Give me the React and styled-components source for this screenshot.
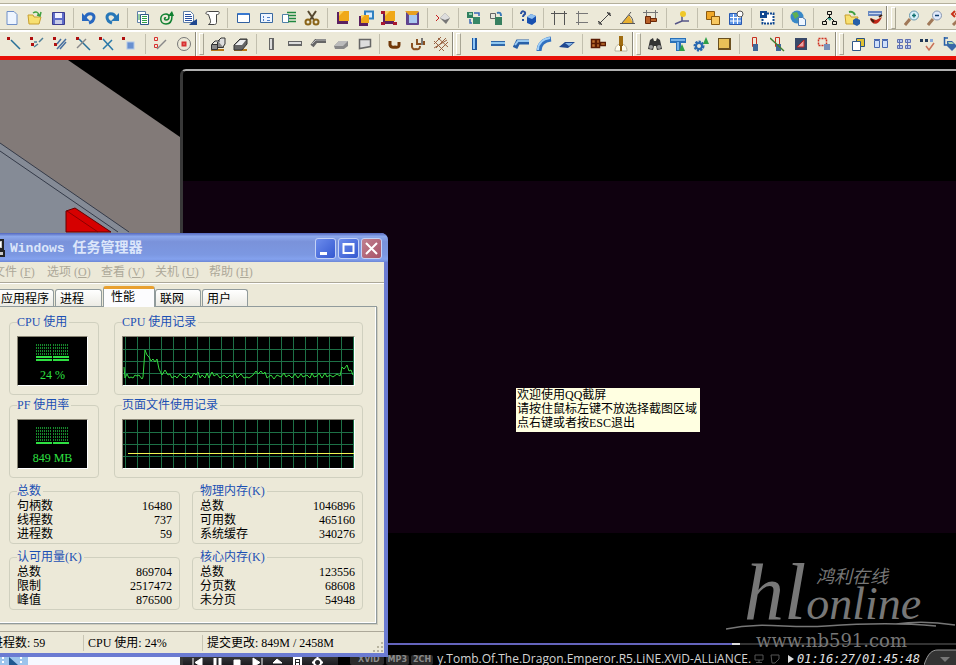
import React from "react";
import styled, { createGlobalStyle, css } from "styled-components";

const GlobalStyle = createGlobalStyle`
  * {
    box-sizing: border-box;
  }
  body {
    margin: 0;
    background: #000;
    font-family: "Liberation Serif", "Noto Sans CJK SC", serif;
    font-size: 12px;
    line-height: 14px;
    color: #000;
  }
  button {
    font: inherit;
    color: inherit;
    padding: 0;
    border: 0;
    background: none;
  }
`;

const S = ({ d, c = "#333", w = 1, f = "none" }) => (
  <path d={d} stroke={c} strokeWidth={w} fill={f} />
);

const Gold = ({ x = 4, y = 1, s = 10 }) => (
  <>
    <rect x={x - 2} y={y + 1} width={s + 1} height={s + 2} fill="#5b2060" />
    <rect x={x} y={y} width={s} height={s} fill="#f0a818" />
    <path d={`M${x} ${y}h${s / 2}l-${s / 2} ${s / 2}z`} fill="#fad060" />
  </>
);

const Dots = () => <rect x="0" y="1" width="3" height="3" fill="#b01010" />;

const icons = {
  new: <S d="M3 1.5h7l3 3v10H3z" c="#6f8fc8" f="#eef5ff" />,
  open: (
    <>
      <S d="M1 5h5l1 2h7l-2 7H2z" c="#c8a030" f="#f8e070" />
      <S d="M6 3c3-2 5-1 6 2M10 5l3 1 1-4" c="#40a040" w={1.5} />
    </>
  ),
  save: (
    <>
      <S d="M2.5 2.5h12v12h-12z" c="#3c3c90" f="#5e6cc8" />
      <rect x="5" y="3" width="7" height="5" fill="#f0f0ff" />
      <rect x="5" y="10" width="7" height="4" fill="#c8cce8" />
    </>
  ),
  undo: (
    <>
      <S d="M4 8c2-6 9-5 9-1 0 3-2 5-5 6" c="#2868c0" w={3} />
      <path d="M1 3v8h8z" fill="#2868c0" />
    </>
  ),
  redo: (
    <>
      <S d="M12 8C10 2 3 3 3 7c0 3 2 5 5 6" c="#2878b8" w={3} />
      <path d="M15 3v8H7z" fill="#2878b8" />
    </>
  ),
  copy: (
    <>
      <S d="M2.500 1.500h8v11h-8z" c="#6080a8" f="#fff" />
      <S d="M5.500 4.500h8v10h-8z" c="#305888" f="#fff" />
      <S d="M7 6.500h5M7 8.500h5M7 10.500h5M7 12.500h5M4 4v6" c="#30a048" />
    </>
  ),
  spiral: (
    <>
      <S d="M8 8c-2-1-2 2 0 2 4 0 4-6 0-6-7 0-7 10 0 10 4 0 6-3 6-8" c="#108030" w={1.5} />
      <path d="M10 6l4-5 2 5z" fill="#108030" />
    </>
  ),
  docs: (
    <>
      <S d="M2.500 1.500h7l3 3v8h-10z" c="#6080a8" f="#fff" />
      <S d="M4 4.500h6M4 6.500h7M4 8.500h7M4 10.500h7" c="#2850a0" />
      <path d="M8 15h8V9l-5 3z" fill="#204890" />
    </>
  ),
  scroll: (
    <S d="M4.500 4.500c-4 0-3-3 0-3h10c1 0 1 3-1 3h-1v8c0 2-2 2-2 2h-6c2-1 2-2 2-4z" c="#444" f="#fff" />
  ),
  window: (
    <>
      <S d="M2.500 3.500h12v9h-12z" c="#3060a0" f="#fff" />
      <rect x="3" y="3" width="11" height="2" fill="#3878d0" />
    </>
  ),
  props: (
    <>
      <S d="M2.500 3.500h12v9h-12z" c="#3868a0" f="#eef5ff" />
      <S d="M5.500 6v2M5.500 9v2M9 7.500h3M9 10.500h3" c="#5080c8" />
    </>
  ),
  list: (
    <>
      <S d="M1.500 4.500h6v8h-6z" c="#5080a8" f="#fff" />
      <S d="M6 2.500h9M7 5.500h8M8 8.500h7M7 11.500h8" c="#208840" w={1.5} />
    </>
  ),
  cut: (
    <>
      <S d="M4 1l6 9M12 1L6 10" c="#554830" w={2} />
      <circle cx="4" cy="12" r="2.500" fill="none" stroke="#8a6418" strokeWidth="2" />
      <circle cx="12" cy="12" r="2.500" fill="none" stroke="#8a6418" strokeWidth="2" />
    </>
  ),
  goldA: <Gold />,
  goldB: (
    <>
      <S d="M7 1.500h8v7H7z" c="#3080c0" w={2} f="#d8ecff" />
      <Gold x={3} y={5} s={8} />
    </>
  ),
  goldC: (
    <>
      <Gold />
      <path d="M0 1h4v3H0zM12 12h4v3h-4zM0 12h4v3H0z" fill="#a81830" />
    </>
  ),
  goldD: (
    <>
      <S d="M2.500 2.500h12v12h-12z" c="#604090" f="#604890" />
      <path d="M1 1h14l-3 4H5z" fill="#e8a020" />
      <rect x="5" y="5" width="8" height="8" fill="#a8c8f0" />
    </>
  ),
  diamond: (
    <>
      <S d="M1 5l3 3-3 3" c="#c82020" />
      <path d="M5 8l5-5 5 5-4 6z" fill="#777" />
      <path d="M5 8l5-5 5 5-5 2z" fill="#ddd" />
    </>
  ),
  cubesA: (
    <>
      <rect x="1" y="2" width="6" height="6" fill="#308060" />
      <rect x="7" y="7" width="7" height="7" fill="#388868" />
      <S d="M8 3h5v3M4 9v4h2" c="#3868b8" w={1.5} />
      <rect x="3" y="3" width="3" height="2" fill="#90d0b0" />
    </>
  ),
  cubesB: (
    <>
      <S d="M1.500 3.500h5v5h-5z" c="#666" f="#e8e8e0" />
      <rect x="6" y="7" width="7" height="8" fill="#388060" />
      <S d="M8 3c3-1 4 0 4 3" c="#3878b8" w={2} />
    </>
  ),
  help: (
    <>
      <S d="M1 4c0-4 5-3 4 0-1 1-2 1-2 3M3 9v2" c="#2850a0" w={2} />
      <path d="M7 7l4-3 5 2v6l-4 3-5-2z" fill="#1850b0" />
      <path d="M7 7l4-3 5 2-4 3z" fill="#90c0f0" />
    </>
  ),
  dimH: <S d="M3.500 1v14M13.500 1v14M0 3.500h16" c="#555" />,
  dimV: <S d="M4.500 1v14M2 3.500h12M2 12.500h12" c="#777" />,
  dimD: <S d="M3 13L13 3M1 11l4 4M10 2l4 4M2 11v3h3M10 3h3v3" c="#444" />,
  angle: (
    <>
      <path d="M2 13h11L9 5z" fill="#e8b030" />
      <S d="M0 13.500h15M2 13L11 2M9 5c3 2 4 5 4 8" c="#555" />
    </>
  ),
  dimBrown: (
    <>
      <S d="M3.500 0v8M12.500 0v8M0 2.500h15" c="#777" />
      <S d="M2.500 6.500h5v7h-5zM7.500 8.500h6v3h-6z" c="#6a2808" f="#b86028" />
    </>
  ),
  pin: (
    <>
      <S d="M1 14l7-3h7M8 11V6" c="#558" w={1.5} />
      <circle cx="9" cy="4" r="3" fill="#f0c828" />
    </>
  ),
  overlap: (
    <>
      <S d="M1.500 1.500h8v8h-8z" c="#8a5a10" f="#f0a828" />
      <S d="M6.500 6.500h8v8h-8z" c="#8a5a10" f="#f8c860" />
    </>
  ),
  calendar: (
    <>
      <S d="M1.500 3.500h12v11h-12z" c="#2858b0" f="#6098e8" />
      <S d="M2 7.500h11M2 11h11M5.500 4v10M9.500 4v10" c="#fff" />
      <circle cx="12" cy="4" r="3" fill="#fff" stroke="#555" />
    </>
  ),
  select: (
    <>
      <path d="M8 3.500h6.500v10h-11V9" fill="#fff" stroke="#104890" strokeWidth="2" strokeDasharray="2 1" />
      <rect x="1" y="1" width="7" height="7" fill="#104890" />
      <rect x="3" y="3" width="2" height="2" fill="#fff" />
    </>
  ),
  globe: (
    <>
      <circle cx="7" cy="7" r="6.500" fill="#3888c8" />
      <path d="M2 3l5-1 2 4-4 3zM7 9l4-2 1 5-3 1z" fill="#60b050" />
      <S d="M8.500 7.500h4l3 2v6h-7z" c="#4878b0" f="#eef6ff" />
    </>
  ),
  tree: (
    <>
      <S d="M6.500 1.500h4v3h-4zM1.500 11.500h4v3h-4zM11.500 11.500h4v3h-4zM8.500 5v3M8 7l-4 4M9 7l4 4" c="#111" />
      <path d="M6 8h5l-2 3z" fill="#40a090" />
    </>
  ),
  folderCube: (
    <>
      <S d="M1 5h5l1 2h7l-2 7H2z" c="#c8a030" f="#f8e070" />
      <S d="M5 2c4-1 5 1 6 3" c="#40a040" w={2} />
      <path d="M9 10l3-2 4 2v4l-3 2-4-2z" fill="#2860a8" />
    </>
  ),
  brush: (
    <>
      <rect x="1" y="1" width="14" height="5" fill="#6888c0" />
      <S d="M2 3.500h12" c="#c8d8f0" />
      <path d="M3 8c1 7 8 8 11 1l1-2-6 3z" fill="#c02818" />
      <S d="M4 9l3 3M12 7l3-2" c="#402010" w={2} />
    </>
  ),
  zoomIn: (
    <>
      <S d="M1 15l5-6" c="#a07858" w={3} />
      <circle cx="10" cy="5.500" r="4.500" fill="#d8f0f8" stroke="#6898b0" />
      <S d="M8 5.500h4M10 3.500v4" c="#107070" w={1.5} />
    </>
  ),
  zoomOut: (
    <>
      <S d="M1 15l5-6" c="#a07858" w={3} />
      <circle cx="10" cy="5.500" r="4.500" fill="#e0e8fa" stroke="#8898b0" />
      <S d="M8 5.500h4" c="#104070" w={1.5} />
    </>
  ),
  zoomBack: (
    <>
      <S d="M5 1L2 4l3 3M9 1L6 4l3 3" c="#c83018" w={2} />
      <S d="M3 15l6-6" c="#a07858" w={3} />
    </>
  ),

  snapA: <><Dots /><S d="M4 4l9 9" c="#287098" w={1.5} /></>,
  snapB: (
    <><Dots /><rect y="7" x="1" width="3" height="3" fill="#b01010" /><S d="M4 11l4-3M9 6l4-4M4 6h3" c="#508098" w={1.5} /></>
  ),
  snapC: (
    <><Dots /><rect y="7" x="1" width="3" height="3" fill="#b01010" /><S d="M4 13l9-10M7 13l6-7M4 8l4-5" c="#4870a0" w={1.5} /></>
  ),
  snapD: <><Dots /><S d="M3 3l11 11" c="#287098" w={1.5} /><S d="M1 12l9-9" c="#888" w={1.5} /></>,
  snapE: <><Dots /><S d="M4 3l10 11M13 4l-9 9" c="#2878a8" w={1.5} /></>,
  snapF: (
    <><Dots /><rect x="5" y="6" width="7" height="7" fill="#6890d0" stroke="#b0c8e8" /></>
  ),
  snapG: (
    <>
      <S d="M1.500 1.500h3v3h-3zM1.500 8.500h3v3h-3z" c="#d83030" />
      <S d="M4 13l9-9" c="#888" w={1.5} />
    </>
  ),
  target: (
    <>
      <circle cx="8" cy="8" r="6.500" fill="none" stroke="#777" />
      <S d="M6.500 6.500h3v3h-3z" c="#d83030" w={2} />
    </>
  ),
  boxesA: (
    <>
      <path d="M1 13h13v2H1z" fill="#b87818" />
      <S d="M1.500 8.500h6v5h-6zM7.500 5.500h6v6h-6z" c="#333" f="#888" />
      <S d="M2 8l3-3h5M8 5l3-3h4v6l-2 3" c="#333" f="#ddd" />
    </>
  ),
  boxesB: (
    <>
      <path d="M1 13h13v2H1z" fill="#b87818" />
      <S d="M1 9l6-6h7v5l-5 6H1z" c="#333" f="#666" />
      <path d="M2 9l5-5h6L9 9z" fill="#eee" />
    </>
  ),
  column: <><rect x="5" y="2" width="5" height="12" fill="#666" /><rect x="6" y="3" width="2" height="10" fill="#ddd" /></>,
  beam: <><rect x="1" y="5" width="14" height="5" fill="#666" /><rect x="2" y="6" width="12" height="2" fill="#ddd" /></>,
  bent: <><S d="M2 10l4-5h10" c="#666" w={4} /><S d="M2 8l4-4h10" c="#bbb" w={1} /></>,
  slab: <><path d="M1 10l5-5h9v5l-4 3H2z" fill="#888" /><path d="M1 10l5-5h9l-5 5z" fill="#bbb" /></>,
  plate: <S d="M3.500 3.500h11v7l-11 2z" c="#666" w={1.5} f="#ddd" />,
  hook: <S d="M3 5v4q1 3 5 2 4 1 4-2V6" c="#703808" w={3} />,
  hooks: <><S d="M2 7v4q1 3 4 2 4 1 4-3M7 3v5h7V5" c="#8a5020" w={2} /><S d="M12 2v7" c="#777" w={2} /></>,
  mesh: <S d="M1 8L8 1M3 12L13 2M6 15l9-9M1 5l10 10M5 2l10 9M1 12l13-8" c="#986040" />,
  columnB: <><rect x="5" y="2" width="5" height="12" fill="#2058a0" /><rect x="6" y="2" width="2" height="11" fill="#90c8f8" /></>,
  beamB: <><rect x="1" y="5" width="14" height="5" fill="#3068a8" /><rect x="1" y="6" width="14" height="2" fill="#90c8f0" /></>,
  bentB: <><S d="M2 12l3-6h11" c="#2860a8" w={5} /><S d="M2 9l3-4h11" c="#98c8f0" w={2} /></>,
  arcB: <><S d="M3 15c0-6 4-11 12-12" c="#3070c0" w={5} /><S d="M2 14c0-6 4-11 12-12" c="#a0d0f8" w={2} /></>,
  wedge: <><path d="M0 11l6-5h10l-7 6z" fill="#204890" /><path d="M6 7h8l-4 3z" fill="#88b8e8" /></>,
  bolts: (
    <S d="M1.500 3.500h4v8h-4zM6.500 3.500h3v8h-3zM10.500 6.500h5v3h-5zM1 7.500h9" c="#5a1c04" w={1.5} f="#c07030" />
  ),
  broom: <><path d="M2 15c0-5 3-7 6-7s6 2 6 7z" fill="#fffdf0" stroke="#b8b4a0" /><rect x="6" y="0" width="4" height="10" fill="#a06c10" /><S d="M8 9v6" c="#8a5c10" w={2} /></>,
  binoc: (
    <>
      <path d="M1 13l2-9 3-2 1 3h2l1-3 3 2 2 9-5 1-1-4H7l-1 4z" fill="#333" />
      <circle cx="4" cy="11" r="2" fill="#999" />
      <circle cx="12" cy="11" r="2" fill="#999" />
    </>
  ),
  teeA: <><path d="M0 2h16v5h-5v8H6V7H0z" fill="#2870b8" /><S d="M1 4h14M8 6v8" c="#90c8f8" w={1.5} /><path d="M9 15l3-7 3 7z" fill="#30a048" /></>,
  gear: (
    <>
      <circle cx="6" cy="10" r="4" fill="none" stroke="#2868b0" strokeWidth="3" strokeDasharray="2 1" />
      <circle cx="6" cy="10" r="3" fill="none" stroke="#2868b0" strokeWidth="2" />
      <path d="M10 8l3-7 3 7z" fill="#30a048" />
    </>
  ),
  panel: <><rect x="2" y="2" width="13" height="12" fill="#6a5020" /><rect x="3" y="3" width="10" height="9" fill="#e8c058" /></>,
  tube: <><S d="M5.500 1.500h4v9h-4z" c="#c83020" /><path d="M6 8h5v7H6z" fill="#406898" /></>,
  tubeCut: <><S d="M5.500 1.500h4v9h-4z" c="#c83020" /><path d="M6 8h5v7H6z" fill="#406898" /><S d="M0 2l14 13" c="#408030" w={1.5} /></>,
  red: <><rect x="2" y="2" width="12" height="12" fill="#384868" /><path d="M4 11l7-7v7z" fill="#e8a0a0" stroke="#c02020" /></>,
  redDash: (
    <>
      <path d="M2.500 2.500h8v7h-8z" fill="none" stroke="#d03020" strokeWidth="1.500" strokeDasharray="2 1" />
      <rect x="8" y="8" width="6" height="6" fill="#7890b8" />
    </>
  ),
  views: <><S d="M6.500 2.500h8v8h-8z" c="#285080" f="#e0c030" /><S d="M2.500 5.500h8v9h-8z" c="#305888" f="#fff" /></>,
  twoWin: <S d="M1.500 4.500h5v7h-5zM9.500 4.500h5v7h-5zM1 3.500h6M9 3.500h6" c="#4868b0" f="#d0e0fa" />,
  grid: <S d="M1.500 3.500h5v3h-5zM9.500 3.500h5v3h-5zM1.500 9.500h5v3h-5zM9.500 9.500h5v3h-5zM3.500 3v10M11.500 3v10" c="#6070b0" f="#b8c8f0" />,
  check: <><path d="M1 3h3v3H1zM6 3h3v3H6z" fill="#203858" /><path d="M11 3h3v3h-3z" fill="#88a8d8" /><S d="M7 10l3 4 5-7" c="#c87058" w={1.5} /></>,
  paint: <><S d="M2.500 1v8h4M2 2h4" c="#2860a8" w={1.5} /><path d="M5 5h5l5 5-5 5-5-5z" fill="#3868a8" /><path d="M6 6h4l2 2H7z" fill="#a8d8b0" /></>,
};

const fileTools = [
  ["new", "open", "save"],
  ["undo", "redo"],
  ["copy", "spiral", "docs", "scroll"],
  ["window", "props", "list", "cut"],
  ["goldA", "goldB", "goldC", "goldD"],
  ["diamond"],
  ["cubesA", "cubesB"],
  ["help"],
  ["dimH", "dimV", "dimD", "angle", "dimBrown"],
  ["pin"],
  ["overlap", "calendar"],
  ["select"],
  ["globe"],
  ["tree", "folderCube", "brush"],
  "break",
  ["zoomIn", "zoomOut", "zoomBack"],
];

const modelTools = [
  ["snapA", "snapB", "snapC", "snapD", "snapE", "snapF"],
  ["snapG", "target"],
  "break",
  ["boxesA", "boxesB"],
  ["column", "beam", "bent", "slab", "plate"],
  ["hook", "hooks", "mesh"],
  "break",
  ["columnB", "beamB", "bentB", "arcB", "wedge"],
  ["bolts", "broom"],
  "break",
  ["binoc", "teeA", "gear", "panel"],
  ["tube", "tubeCut", "red", "redDash"],
  "break",
  ["views", "twoWin", "grid", "check", "paint"],
];

function Tools({ items, wide, indent }) {
  return (
    <ToolRow $indent={indent}>
      {items.map((group, i) => {
        if (group === "break") return <Break key={i} $wide={wide} />;
        return (
          <React.Fragment key={i}>
            {i > 0 && items[i - 1] !== "break" && <Separator />}
            {group.map((name) => (
              <ToolButton key={name} type="button" aria-label={name}>
                <svg width="16" height="16" viewBox="0 0 16 16" aria-hidden="true">
                  {icons[name]}
                </svg>
              </ToolButton>
            ))}
          </React.Fragment>
        );
      })}
    </ToolRow>
  );
}

function Meter({ value, lit }) {
  return (
    <MeterBox>
      <svg width="34" height="18" viewBox="0 0 34 18" aria-hidden="true">
        {[0, 3, 6, 9, 12, 15].map((y, i) => {
          const on = i >= 6 - lit;
          return (
            <path
              key={y}
              d={`M0 ${y + 1}h16M17 ${y + 1}h16`}
              stroke={on ? "#2ee042" : "#168a2c"}
              strokeWidth="2"
              strokeDasharray={on ? "none" : "1 1"}
            />
          );
        })}
      </svg>
      {value}
    </MeterBox>
  );
}

const cpuTrace =
  "1,30 2,41 4,37 6,41 8,40 10,41 12,38 14,39 16,38 19,42 20,40 22,13 24,18 26,20 28,24 30,22 32,25 34,22 36,32 39,38 42,33 45,38 47,37 49,41 52,39 54,41 57,37 60,40 63,41 66,38 68,41 71,36 73,38 75,35 77,41 79,38 82,41 84,36 86,41 89,35 91,39 94,37 97,41 101,38 104,41 107,38 109,40 112,36 114,41 118,37 121,41 124,40 126,41 130,38 133,34 135,37 138,34 140,37 142,35 144,41 148,38 151,42 154,38 158,40 161,36 163,40 166,38 169,41 172,37 175,41 178,37 180,40 184,38 187,41 189,36 191,40 194,39 196,36 199,41 202,36 204,40 207,38 210,40 214,37 217,39 219,30 221,32 224,28 226,34 228,33 230,38";

function Chart({ points, color }) {
  return (
    <ChartBox>
      <svg width="100%" height="48" aria-hidden="true">
        {Array.from({ length: 20 }, (_, i) => (
          <rect key={i} x={i * 12 + 2} y="0" width="1" height="48" fill="#1d7046" />
        ))}
        {[12, 24, 36].map((y) => (
          <rect key={y} x="0" y={y} width="100%" height="1" fill="#1d7046" />
        ))}
        <polyline points={points} fill="none" stroke={color} />
      </svg>
    </ChartBox>
  );
}

function Figures({ title, rows }) {
  return (
    <Group $compact>
      <legend>{title}</legend>
      <FigureTable>
        <tbody>
          {rows.map(([label, value]) => (
            <tr key={label}>
              <th scope="row">{label}</th>
              <td>{value}</td>
            </tr>
          ))}
        </tbody>
      </FigureTable>
    </Group>
  );
}

function TaskManager() {
  return (
    <Window>
      <TitleBar>
        <svg width="16" height="18" viewBox="0 0 16 18" aria-hidden="true">
          <path d="M2 1h12v9H2zM4 12h11v5H4z" fill="#c8c8c8" stroke="#222" strokeWidth="2" />
          <path d="M5 3h7v5H5z" fill="#fff" />
        </svg>
        <h1>
          <span>Windows </span>任务管理器
        </h1>
        <CaptionButton type="button" aria-label="最小化">
          <svg width="19" height="19" aria-hidden="true">
            <path d="M4 13h7v3H4z" fill="#fff" />
          </svg>
        </CaptionButton>
        <CaptionButton type="button" aria-label="最大化">
          <svg width="19" height="19" aria-hidden="true">
            <path d="M4.500 5h10v9h-10zM4 5.500h11" fill="none" stroke="#fff" strokeWidth="2" />
          </svg>
        </CaptionButton>
        <CaptionButton type="button" aria-label="关闭" $close>
          <svg width="19" height="19" aria-hidden="true">
            <path d="M4 4l11 11M15 4L4 15" stroke="#fff" strokeWidth="2" />
          </svg>
        </CaptionButton>
      </TitleBar>
      <MenuBar>
        {[["文件", "F"], ["选项", "O"], ["查看", "V"], ["关机", "U"], ["帮助", "H"]].map(([label, key]) => (
          <button type="button" key={key}>
            {label} (<u>{key}</u>)
          </button>
        ))}
      </MenuBar>
      <Tabs role="tablist">
        <Tab type="button" role="tab" $width={58}>应用程序</Tab>
        <Tab type="button" role="tab" $width={47}>进程</Tab>
        <Tab type="button" role="tab" $width={52} $active aria-selected="true">性能</Tab>
        <Tab type="button" role="tab" $width={46}>联网</Tab>
        <Tab type="button" role="tab" $width={46}>用户</Tab>
      </Tabs>
      <Panel>
        <HistoryGrid>
          <Group>
            <legend>CPU 使用</legend>
            <Meter value="24 %" lit={2} />
          </Group>
          <Group>
            <legend>CPU 使用记录</legend>
            <Chart points={cpuTrace} color="#34d840" />
          </Group>
          <Group>
            <legend>PF 使用率</legend>
            <Meter value="849 MB" lit={1} />
          </Group>
          <Group>
            <legend>页面文件使用记录</legend>
            <Chart points="5,33.500 232,33.500" color="#f4f450" />
          </Group>
        </HistoryGrid>
        <FigureGrid>
          <Figures title="总数" rows={[["句柄数", "16480"], ["线程数", "737"], ["进程数", "59"]]} />
          <Figures title="物理内存(K)" rows={[["总数", "1046896"], ["可用数", "465160"], ["系统缓存", "340276"]]} />
          <Figures title="认可用量(K)" rows={[["总数", "869704"], ["限制", "2517472"], ["峰值", "876500"]]} />
          <Figures title="核心内存(K)" rows={[["总数", "123556"], ["分页数", "68608"], ["未分页", "54948"]]} />
        </FigureGrid>
      </Panel>
      <StatusBar>
        <span>进程数: 59</span>
        <span>CPU 使用: 24%</span>
        <span>提交更改: 849M / 2458M</span>
        <svg width="12" height="12" aria-hidden="true">
          <path d="M9 1h2v2H9zM5 5h2v2H5zM9 5h2v2H9zM1 9h2v2H1zM5 9h2v2H5zM9 9h2v2H9z" fill="#b8b4a0" />
        </svg>
      </StatusBar>
    </Window>
  );
}

const transport = {
  previous: "M3 3v9M12 3v9L5 7.500z",
  pause: "M5 3v9M10 3v9",
  stop: "M4 5h6v6H4z",
  next: "M3 3v9l7-4.500zM12 3v9",
  eject: "M3 8l4-4 5 4zM3 11h9",
  playlist: "M4 3h7v9H4zM6 6h3M6 9h3",
  settings: "M7.500 4a3.500 3.500 0 1 0 .1 0zM7.500 2v2M2 7.500h2M11 7.500h2",
};

const outlined = ["playlist", "settings"];

function Player() {
  return (
    <PlayerFrame>
      <Letterbox />
      <Video />
      <Letterbox />
      <Progress />
      <Controls>
        <Transport>
          {Object.entries(transport).map(([name, d]) => (
            <button type="button" key={name} aria-label={name}>
              <svg width="15" height="15" aria-hidden="true">
                <path
                  d={d}
                  stroke="#fff"
                  strokeWidth={outlined.includes(name) ? 2 : 1}
                  fill={outlined.includes(name) ? "none" : "#fff"}
                />
                {name === "pause" && <path d={d} stroke="#fff" strokeWidth="3" />}
              </svg>
            </button>
          ))}
        </Transport>
        <Badges>
          <Badge>XViD</Badge>
          <Badge>MP3</Badge>
          <Badge>2CH</Badge>
        </Badges>
        <TrackName>y.Tomb.Of.The.Dragon.Emperor.R5.LiNE.XViD-ALLiANCE.</TrackName>
        <Status width="46" height="12" aria-hidden="true">
          <path d="M4 2h8v5H4zM8 7v3M5 9.500h6M20 2h8v4l-4 4h-3z" fill="none" stroke="#555" />
          <path d="M37 2l6 4-6 4z" fill="#ddd" />
        </Status>
        <Clock>01:16:27/01:45:48</Clock>
        <Corner aria-hidden="true" viewBox="0 0 32 16">
          <path d="M0 16C4 4 8 1 14 1h18v15z" fill="#333" />
          <path d="M0 16C4 4 8 1 14 1h18" fill="none" stroke="#999" />
          <path d="M16 8h10l-5 5z" fill="#777" />
        </Corner>
      </Controls>
    </PlayerFrame>
  );
}

export default function App() {
  return (
    <Screen>
      <GlobalStyle />
      <Toolbars>
        <Tools items={fileTools} wide />
        <Tools items={modelTools} indent />
      </Toolbars>
      <Workspace>
        <ModelPane>
          <svg width="180" height="597" aria-hidden="true">
            <path d="M0 0H68L180 77V597H0z" fill="#827a78" />
            <path d="M0 83L129 172V597H0z" fill="#858b96" />
            <path d="M0 83L129 172M0 91L118 172" fill="none" stroke="#343a48" />
            <path d="M66 172V151L75 148L111 172z" fill="#d60000" stroke="#600" />
            <path d="M67 151L98 172" stroke="#8c0000" />
          </svg>
          <ModelTab>
            <svg width="28" height="8" aria-hidden="true">
              <path d="M0 0h28v8H0z" fill="#9cc4ec" />
              <path d="M3 0v8M21 0v8" stroke="#fff" strokeWidth="2" strokeDasharray="2 2" />
              <path d="M9 0l9 8H9z" fill="#205890" />
            </svg>
          </ModelTab>
        </ModelPane>
        <Player />
        <Hint>
          欢迎使用QQ截屏
          <br />
          请按住鼠标左键不放选择截图区域
          <br />
          点右键或者按ESC退出
        </Hint>
        <Watermark>
          <Chinese>鸿利在线</Chinese>
          <Wordmark>
            <big>hl</big>online
          </Wordmark>
          <svg width="230" height="10" viewBox="0 0 230 10" aria-hidden="true">
            <path d="M0 8C40 0 60 8 100 5S180 2 210 5M170 3C190 0 210 1 229 4" fill="none" stroke="#777" strokeWidth="1.500" />
          </svg>
          <Site>www.nb591.com</Site>
        </Watermark>
        <TaskManager />
      </Workspace>
    </Screen>
  );
}

const Screen = styled.div`
  height: 100vh;
  min-height: 600px;
  display: flex;
  flex-direction: column;
  overflow: hidden;
`;

const Toolbars = styled.header`
  background: #ece9d8;
  border-bottom: 4px solid #e81008;
  padding-top: 4px;
`;

const ToolRow = styled.div`
  display: flex;
  height: 26px;
  align-items: center;
  overflow: hidden;
  border-top: 1px solid #fff;
  box-shadow: inset 0 1px 0 #fff, 0 -1px 0 #b4b09c;
  padding-left: ${({ $indent }) => ($indent ? "3px" : "0")};
`;

const ToolButton = styled.button`
  flex: none;
  width: 23px;
  height: 24px;
  display: flex;
  align-items: center;
  justify-content: center;
`;

const Separator = styled.span`
  flex: none;
  width: 1px;
  height: 20px;
  margin: 0 3px 0 4px;
  background: #c2bfae;
`;

const Break = styled.span`
  flex: none;
  width: ${({ $wide }) => ($wide ? "14px" : "11px")};
  height: 24px;
  border-left: 1px solid #8c897a;
  box-shadow: inset 1px 0 0 #fff;
  display: flex;
  align-items: center;
  justify-content: center;

  &::after {
    content: "";
    width: 3px;
    height: 20px;
    border: 1px solid #a8a594;
    border-color: #fff #a8a594 #a8a594 #fff;
  }
`;

const Workspace = styled.main`
  flex: 1;
  min-height: 0;
  display: flex;
  position: relative;
`;

const ModelPane = styled.section`
  width: 180px;
  flex: none;
  display: flex;
  flex-direction: column;
  justify-content: space-between;
  overflow: hidden;
`;

const ModelTab = styled.div`
  height: 8px;
  flex: none;
  background: #f6f9ff;
  display: flex;
`;

const PlayerFrame = styled.section`
  flex: 1;
  min-width: 0;
  margin-top: 9px;
  display: flex;
  flex-direction: column;
  border-top: 2px solid #b0b0b0;
  border-left: 3px solid #383838;
  border-top-left-radius: 6px;
  background: #000;
`;

const Letterbox = styled.div`
  height: 110px;
  flex: none;
`;

const Video = styled.div`
  flex: 1;
  background: #0f010f;
`;

const Progress = styled.div`
  height: 2px;
  background: linear-gradient(90deg, #6464bc 71%, #dcdcdc 71%, #dcdcdc 72%, #333 72%);
`;

const Controls = styled.div`
  height: 20px;
  flex: none;
  display: flex;
  align-items: flex-end;
`;

const Transport = styled.div`
  display: flex;
  width: 155px;
  height: 10px;
  flex: none;
  gap: 5px;
  padding-left: 7px;
  overflow: hidden;
  background: linear-gradient(#3c3c40, #1c1c20);
`;

const Badges = styled.div`
  display: flex;
  gap: 2px;
  margin: 0 4px 0 12px;
  flex: none;
`;

const Badge = styled.span`
  font: bold 8px/10px "DejaVu Sans", sans-serif;
  color: #8a8a8a;
  background: #2c2c2c;
  border-radius: 2px;
  padding: 0 2px;

  &:first-child {
    padding: 0 4px 0 8px;
  }
`;

const TrackName = styled.span`
  font: 12px/12px "Open Sans", sans-serif;
  color: #d4d4d4;
  white-space: nowrap;
`;

const Status = styled.svg`
  flex: none;
`;

const Clock = styled.time`
  font: italic 12px/12px "DejaVu Sans Mono", monospace;
  color: #e4e4e4;
`;

const Corner = styled.svg`
  width: 32px;
  height: 16px;
  margin-left: auto;
  flex: none;
`;

const Hint = styled.p`
  position: absolute;
  left: 516px;
  top: 328px;
  margin: 0;
  padding: 0 3px 2px 1px;
  background: #ffffe1;
  white-space: nowrap;
`;

const Watermark = styled.div`
  position: absolute;
  right: 0;
  bottom: 14px;
  width: 230px;
  color: #777;
  display: flex;
  flex-direction: column;

  svg {
    flex: none;
  }
`;

const Chinese = styled.span`
  font: italic 18px/20px "Noto Sans CJK SC", sans-serif;
  margin: 0 0 -10px 90px;
`;

const Wordmark = styled.span`
  font: italic 46px/34px "Liberation Serif", serif;
  margin-left: 18px;
  white-space: nowrap;

  big {
    font-size: 80px;
  }
`;

const Site = styled.span`
  font: 18px/20px "DejaVu Serif", serif;
  margin-left: 30px;
`;

const Window = styled.section`
  position: absolute;
  left: -17px;
  top: 173px;
  width: 405px;
  background: #ece9d8;
  border: solid #6b7bd2;
  border-width: 0 4px 4px;
  border-radius: 7px 7px 0 0;
`;

const TitleBar = styled.header`
  height: 29px;
  margin: 0 -4px;
  padding: 0 6px;
  display: flex;
  align-items: center;
  gap: 2px;
  border-radius: 7px 7px 0 0;
  background: linear-gradient(#5468be, #8ca8ec 12%, #7a92da 30%, #7c98e2 75%, #84a2ee 90%, #6c86d6);

  h1 {
    flex: 1;
    margin: 0;
    padding-left: 3px;
    font: bold 14px/18px "Noto Sans CJK SC", sans-serif;
    color: #dce6fa;
    white-space: pre;
  }

  h1 span {
    font: bold 13px/18px "Liberation Mono", monospace;
  }
`;

const CaptionButton = styled.button`
  width: 21px;
  height: 21px;
  margin-top: 2px;
  border-radius: 3px;
  display: flex;
  background: ${({ $close }) =>
    $close ? "linear-gradient(135deg, #c08090, #a85468)" : "linear-gradient(135deg, #6c8cec, #3458d0)"};

  ${TitleBar} & {
    border: 1px solid #c4d2f6;
  }
`;

const MenuBar = styled.nav`
  height: 21px;
  display: flex;
  border-bottom: 1px solid #aca899;
  box-shadow: 0 1px 0 #fff;
  color: #aca899;

  button {
    width: 54px;
    padding-left: 6px;
    text-align: left;
    white-space: nowrap;
  }
`;

const Tabs = styled.div`
  display: flex;
  align-items: flex-end;
  height: 23px;
  padding-left: 9px;
`;

const Tab = styled.button`
  width: ${({ $width }) => $width}px;
  height: 17px;
  padding: 1px 0 0 4px;
  text-align: left;
  white-space: nowrap;
  background: linear-gradient(#fff, #ecebe4);
  border: solid #919b9c;
  border-width: 1px 1px 0;
  border-radius: 3px 3px 0 0;

  & + & {
    margin-left: 1px;
  }

  ${({ $active }) =>
    $active &&
    css`
      && {
        height: 21px;
        margin: 0 -1px -1px;
        padding: 0 0 2px 7px;
        background: #fcfcfe;
        border-top: 3px solid #e8a030;
        position: relative;
        z-index: 1;
      }
    `}
`;

const Panel = styled.div`
  margin: 0 7px 7px 9px;
  padding: 8px 13px 13px 12px;
  border: 1px solid #919b9c;
  box-shadow: inset -1px -1px 0 #fff, 1px 1px 0 #d0cdbe;
`;

const HistoryGrid = styled.div`
  display: grid;
  grid-template-columns: 90px 1fr;
  gap: 3px 15px;
`;

const FigureGrid = styled.div`
  display: grid;
  grid-template-columns: 1fr 1fr;
  gap: 6px 12px;
  margin-top: 6px;
`;

const Group = styled.fieldset`
  min-width: 0;
  margin: 0;
  border: 1px solid #d0d0bf;
  border-radius: 4px;
  padding: ${({ $compact }) => ($compact ? "1px 7px 2px" : "7px 7px 8px")};

  legend {
    padding: 0 2px 0 0;
    height: 14px;
    color: #1c50b4;
    white-space: nowrap;
  }
`;

const MeterBox = styled.div`
  width: 71px;
  height: 50px;
  padding-top: 7px;
  background: #000;
  border: 1px solid #888474;
  border-color: #888474 #fff #fff #888474;
  color: #2ee042;
  display: flex;
  flex-direction: column;
  align-items: center;
  gap: 6px;
`;

const ChartBox = styled.div`
  height: 50px;
  background: #000;
  border: 1px solid #888474;
  border-color: #888474 #fff #fff #888474;

  svg {
    display: block;
  }
`;

const FigureTable = styled.table`
  width: 100%;
  border-collapse: collapse;
  line-height: 14px;

  th,
  td {
    padding: 0;
    height: 14px;
    font-weight: normal;
    text-align: left;
  }

  td {
    text-align: right;
  }
`;

const StatusBar = styled.footer`
  height: 22px;
  display: flex;
  align-items: center;
  border-top: 1px solid #aca899;

  span {
    padding-left: 4px;
    white-space: nowrap;
    line-height: 16px;
  }

  span:nth-child(1) {
    width: 96px;
  }

  span:nth-child(2) {
    width: 120px;
    border: solid #c8c5b4;
    border-width: 0 1px;
  }

  svg {
    margin-left: auto;
    align-self: flex-end;
  }
`;
